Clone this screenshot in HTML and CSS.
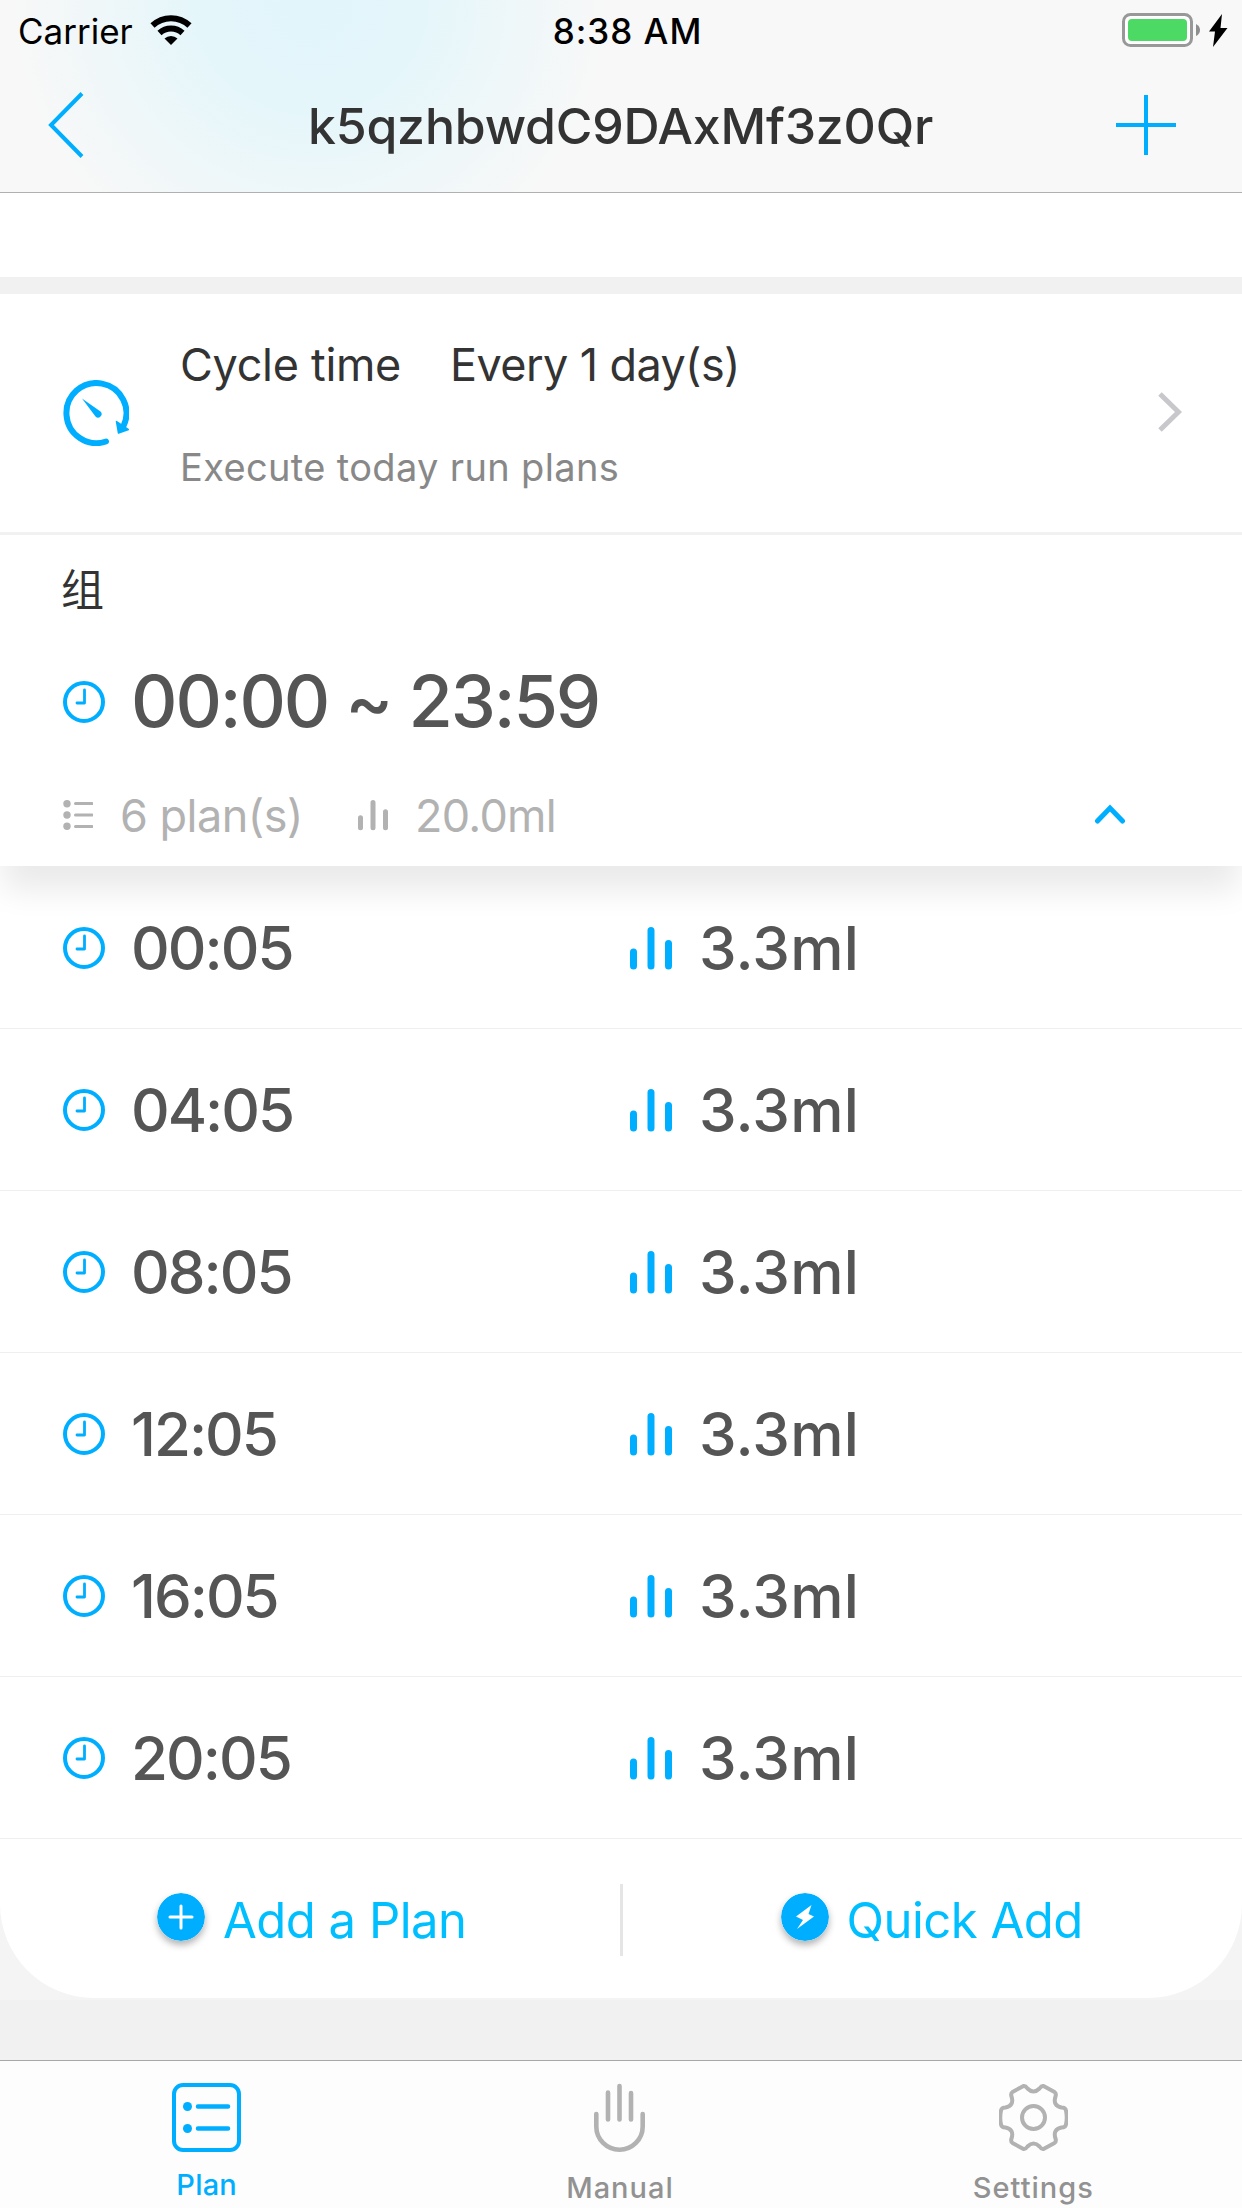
FILE: index.html
```html
<!DOCTYPE html>
<html lang="en">
<head>
  <meta charset="UTF-8">
  <title>Plan</title>
  <link rel="stylesheet" href="styles.css">
</head>
<body>
  <svg class="defs">
    <symbol id="clock" viewBox="0 0 42 42">
      <circle cx="21" cy="21" r="19" fill="none" stroke="currentColor" stroke-width="4"/>
      <path d="M21.5 9v13H14" fill="none" stroke="currentColor" stroke-width="2.8" stroke-linecap="round" stroke-linejoin="round"/>
    </symbol>
    <symbol id="bars" viewBox="0 0 42 44">
      <path d="M3.5 26v14M21 4.500v35.500M38.500 17.500v22.500" fill="none" stroke="currentColor" stroke-width="7" stroke-linecap="round"/>
    </symbol>
  </svg>

  <header class="header">
    <div class="status">
      <div class="status-left">
        <span class="carrier">Carrier</span>
        <svg class="wifi" viewBox="0 0 42 30">
          <path d="M2.500 10.500a27 27 0 0 1 37 0M9.500 18a17 17 0 0 1 23 0" fill="none" stroke="#000" stroke-width="6"/>
          <path d="M21 30l-6.500-6.500a9.500 9.500 0 0 1 13 0z"/>
        </svg>
      </div>
      <span class="time">8:38 AM</span>
      <div class="status-right">
        <svg class="battery" viewBox="0 0 106 34">
          <rect x="1.500" y="1.500" width="68" height="31" rx="7" fill="#fff" stroke="#989898" stroke-width="3"/>
          <rect x="6" y="6" width="59" height="22" rx="4" fill="#4cd964"/>
          <path d="M74 11q4 2 4 6t-4 6z" fill="#8e8e8e"/>
          <path d="M100 1L87 18.500h6L91 34l14.500-19h-7z"/>
        </svg>
      </div>
    </div>
    <div class="navbar">
      <svg class="back" viewBox="0 0 36 66"><path d="M34 1.500L3 33l31 31.500" fill="none" stroke="#00aeff" stroke-width="4"/></svg>
      <h1>k5qzhbwdC9DAxMf3z0Qr</h1>
      <svg class="plus" viewBox="0 0 60 60"><path d="M30 0v60M0 30h60" stroke="#00aeff" stroke-width="4"/></svg>
    </div>
  </header>

  <main class="content">
    <div class="gap"></div>
    <section class="cycle">
      <svg class="cycle-icon" viewBox="0 0 66 66">
        <path d="M43 61.500A30 30 0 1 1 60.500 46" fill="none" stroke="#00aeff" stroke-width="6" stroke-linecap="round"/>
        <path d="M53.500 41.500l2 11.500 10-3.500z" fill="#00aeff" stroke="#00aeff" stroke-width="1.500" stroke-linejoin="round"/>
        <path d="M19 18.500L37.500 31.500a3.300 3.300 0 0 1-5 5z" fill="#00aeff"/>
      </svg>
      <div class="cycle-text">
        <p class="cycle-title"><span class="cycle-name">Cycle time</span><span class="cycle-value">Every 1 day(s)</span></p>
        <p class="cycle-sub">Execute today run plans</p>
      </div>
      <svg class="arrow" viewBox="0 0 24 40"><path d="M2 2l18.500 18L2 38" fill="none" stroke="#c7c7cc" stroke-width="5"/></svg>
    </section>

    <section class="group">
      <h2 class="group-name">组</h2>
      <div class="group-time">
        <svg class="clock"><use href="#clock"/></svg>
        <span class="range">00:00 ~ 23:59</span>
      </div>
      <div class="group-info">
        <svg class="list" viewBox="0 0 30 30">
          <path d="M12.500 3.500H29M12.500 15H29M12.500 26.500H29" stroke="#b2b2b2" stroke-width="3" stroke-linecap="round"/>
          <g fill="#b2b2b2"><circle cx="4" cy="3.800" r="3.700"/><circle cx="4" cy="15" r="3.700"/><circle cx="4" cy="26.300" r="3.700"/></g>
        </svg>
        <span class="plans">6 plan(s)</span>
        <svg class="bars small"><use href="#bars"/></svg>
        <span class="total">20.0ml</span>
        <svg class="collapse" viewBox="0 0 30 20"><path d="M2.500 17L15 4l12.500 13" fill="none" stroke="#00aeff" stroke-width="5" stroke-linecap="round"/></svg>
      </div>
    </section>

    <ul class="plan-list">
      <li><svg class="clock"><use href="#clock"/></svg><span class="at">00:05</span><svg class="bars"><use href="#bars"/></svg><span class="dose">3.3ml</span></li>
      <li><svg class="clock"><use href="#clock"/></svg><span class="at">04:05</span><svg class="bars"><use href="#bars"/></svg><span class="dose">3.3ml</span></li>
      <li><svg class="clock"><use href="#clock"/></svg><span class="at">08:05</span><svg class="bars"><use href="#bars"/></svg><span class="dose">3.3ml</span></li>
      <li><svg class="clock"><use href="#clock"/></svg><span class="at">12:05</span><svg class="bars"><use href="#bars"/></svg><span class="dose">3.3ml</span></li>
      <li><svg class="clock"><use href="#clock"/></svg><span class="at">16:05</span><svg class="bars"><use href="#bars"/></svg><span class="dose">3.3ml</span></li>
      <li><svg class="clock"><use href="#clock"/></svg><span class="at">20:05</span><svg class="bars"><use href="#bars"/></svg><span class="dose">3.3ml</span></li>
    </ul>

    <div class="actions-wrap">
      <div class="actions">
        <a class="action add">
          <svg class="badge" viewBox="0 0 48 48"><circle cx="24" cy="24" r="24" fill="#00aeff"/><path d="M24 13v22M13 24h22" stroke="#fff" stroke-width="3" stroke-linecap="round"/></svg>
          <span>Add a Plan</span>
        </a>
        <div class="divider"></div>
        <a class="action quick">
          <svg class="badge" viewBox="0 0 48 48"><circle cx="24" cy="24" r="24" fill="#00aeff"/><path d="M30.500 12L15 23.500l7 3.500-6 9L33 23.500 27.500 21z" fill="#fff"/></svg>
          <span>Quick Add</span>
        </a>
      </div>
    </div>
  </main>

  <nav class="tabbar">
    <a class="tab active">
      <svg viewBox="0 0 69 69">
        <g fill="none" stroke="currentColor" stroke-width="4"><rect x="2" y="2" width="65" height="65" rx="9"/><path d="M26 23.500h30M26 45.500h30" stroke-linecap="round" stroke-width="4.500"/></g>
        <circle cx="15.500" cy="23.500" r="4.500" fill="currentColor"/><circle cx="15.500" cy="45.500" r="4.500" fill="currentColor"/>
      </svg>
      <span>Plan</span>
    </a>
    <a class="tab">
      <svg viewBox="0 0 69 69">
        <path d="M11.300 31v12.500a23.200 23.200 0 0 0 46.400 0V31M23 9.500v27M34.500 3v33.500M46 10v26.500" fill="none" stroke="#b2b2b2" stroke-width="4.600" stroke-linecap="round"/>
      </svg>
      <span>Manual</span>
    </a>
    <a class="tab">
      <svg viewBox="0.5 0.5 69 69">
        <g fill="none" stroke="#b2b2b2" stroke-width="4" stroke-linejoin="round">
          <circle cx="35" cy="35" r="11.500"/>
          <path d="M25 3.500Q27 3 29 6Q35 12 41 6Q43 3 45 3.500L56 9.500Q58 11 57 14Q54 23 63 25Q67 25 67.500 28Q69 35 67.500 42Q67 45 63 45Q54 47 57 56Q58 59 56 60.500L45 66.500Q43 67 41 64Q35 58 29 64Q27 67 25 66.500L14 60.500Q12 59 13 56Q16 47 7 45Q3 45 2.500 42Q1 35 2.500 28Q3 25 7 25Q16 23 13 14Q12 11 14 9.500Z"/>
        </g>
      </svg>
      <span>Settings</span>
    </a>
  </nav>
</body>
</html>
```
FILE: styles.css
```css
* {
  box-sizing: border-box;
}
body {
  margin: 0;
  width: 1242px;
  height: 2208px;
  overflow: hidden;
  display: flex;
  flex-direction: column;
  background: #f1f1f1;
  font-family: Inter, "Noto Sans CJK SC", sans-serif;
  color: #333;
}
h1, h2, p, ul {
  margin: 0;
  padding: 0;
}
svg {
  display: block;
  flex: none;
}
span, h1 {
  white-space: nowrap;
}
.defs {
  position: absolute;
  width: 0;
  height: 0;
}

/* status bar + navigation bar */
.header {
  flex: none;
  height: 193px;
  border-bottom: 1px solid #b0b0b0;
  background: radial-gradient(ellipse 300px 290px at 310px 0, #e2f5fb 0, #e4f6fa 35%, #eff7f9 70%, #f8f8f8 100%) #f8f8f8;
}
.status {
  height: 60px;
  display: grid;
  grid-template-columns: 1fr auto 1fr;
  font-size: 35px;
  line-height: 62px;
  color: #000;
}
.status-left {
  display: flex;
  padding-left: 18px;
}
.carrier {
  width: 132px;
}
.wifi {
  width: 42px;
  height: 30px;
  margin-top: 15px;
}
.time {
  padding-left: 13px;
  font-weight: 500;
  letter-spacing: 1px;
}
.status-right {
  display: flex;
  justify-content: flex-end;
  padding: 13px 14px 0 0;
}
.battery {
  width: 106px;
  height: 34px;
}
.navbar {
  height: 130px;
  display: flex;
  align-items: center;
  padding: 0 66px 0 48px;
}
.back {
  width: 36px;
  height: 66px;
}
.plus {
  width: 60px;
  height: 60px;
}
h1 {
  flex: 1;
  padding: 1px 0 0 41px;
  text-align: center;
  font-size: 50px;
  font-weight: 500;
  letter-spacing: -0.2px;
}

.content {
  flex: 1;
  display: flex;
  flex-direction: column;
}
.gap {
  height: 101px;
  background: #fff;
  border-bottom: 17px solid #f1f1f1;
}
.cycle {
  height: 241px;
  display: flex;
  align-items: center;
  padding: 0 60px 0 63px;
  background: #fff;
  border-bottom: 3px solid #f1f1f1;
}
.cycle-icon {
  width: 66px;
  height: 66px;
}
.cycle-text {
  flex: 1;
  padding: 2px 0 0 51px;
}
.cycle-title {
  display: flex;
  font-size: 45px;
  line-height: 54px;
}
.cycle-name {
  width: 270px;
  letter-spacing: -0.3px;
}
.cycle-value {
  letter-spacing: -0.6px;
}
.cycle-sub {
  margin-top: 52px;
  font-size: 38px;
  line-height: 46px;
  letter-spacing: 0.35px;
  color: #888;
}
.arrow {
  width: 24px;
  height: 40px;
  margin-bottom: 2px;
}

/* plan group */
.group {
  height: 331px;
  padding: 0 117px 0 63px;
  background: #fff;
  box-shadow: 0 27px 30px -3px rgba(0, 0, 0, 0.085);
  position: relative;
  z-index: 1;
}
.group-name {
  height: 110px;
  margin-left: -2px;
  font-size: 43px;
  font-weight: 400;
  line-height: 110px;
}
.group-time {
  height: 113px;
  display: flex;
  align-items: center;
  color: #555;
}
.clock {
  width: 42px;
  height: 42px;
  color: #00aeff;
}
.range {
  padding: 0 0 2px 26px;
  font-size: 72px;
  font-weight: 500;
  letter-spacing: -2.1px;
}
.group-info {
  height: 113px;
  display: flex;
  align-items: center;
  font-size: 45px;
  color: #b2b2b2;
}
.list {
  width: 30px;
  height: 30px;
}
.plans {
  width: 265px;
  padding: 2px 0 0 27px;
  letter-spacing: -0.5px;
}
.total {
  padding: 2px 0 0 27px;
  letter-spacing: -0.7px;
}
.collapse {
  width: 30px;
  height: 20px;
  margin: 0 0 2px auto;
}
.bars {
  width: 42px;
  height: 44px;
  color: #00aeff;
}
.bars.small {
  width: 30px;
  height: 32px;
  color: #b2b2b2;
}

.plan-list {
  list-style: none;
  background: #fff;
}
.plan-list li {
  height: 162px;
  display: flex;
  align-items: center;
  padding-left: 63px;
  border-top: 1px solid #efefef;
  font-size: 60px;
  font-weight: 500;
  color: #555;
}
.plan-list li:first-child {
  border-top-color: #fff;
}
.at {
  width: 525px;
  padding-left: 26px;
  letter-spacing: -2px;
}
.dose {
  padding-left: 27px;
  letter-spacing: 0.2px;
}

.actions-wrap {
  height: 162px;
  background: #f4f4f4;
}
.actions {
  height: 160px;
  display: flex;
  border-top: 1px solid #efefef;
  border-radius: 0 0 94px 94px;
  background: #fff;
}
.action {
  flex: 1;
  display: flex;
  color: #00bfff;
  font-size: 49px;
  line-height: 60px;
  letter-spacing: -0.5px;
}
.action span {
  padding: 52px 0 0 18px;
}
.add {
  padding-left: 157px;
}
.quick {
  padding-left: 158px;
}
.badge {
  width: 48px;
  height: 48px;
  margin-top: 54px;
  border-radius: 50%;
  box-shadow: 0 4px 7px rgba(0, 0, 0, 0.3);
}
.divider {
  width: 3px;
  height: 72px;
  margin: 45px 0 0 1px;
  background: #e5e5e5;
}

.tabbar {
  flex: none;
  height: 148px;
  display: flex;
  padding-right: 2px;
  border-top: 1px solid #a8a8a8;
  background: #fdfdfd;
}
.tab {
  flex: 1;
  display: flex;
  flex-direction: column;
  align-items: center;
  padding-top: 22px;
  font-size: 29px;
  font-weight: 500;
  line-height: 36px;
  color: #929292;
}
.tab svg {
  width: 69px;
  height: 69px;
}
.tab span {
  margin-top: 18px;
  letter-spacing: 1px;
}
.tab.active {
  color: #00aeff;
}
.tab.active span {
  margin-top: 15px;
  letter-spacing: 0.2px;
}
```
